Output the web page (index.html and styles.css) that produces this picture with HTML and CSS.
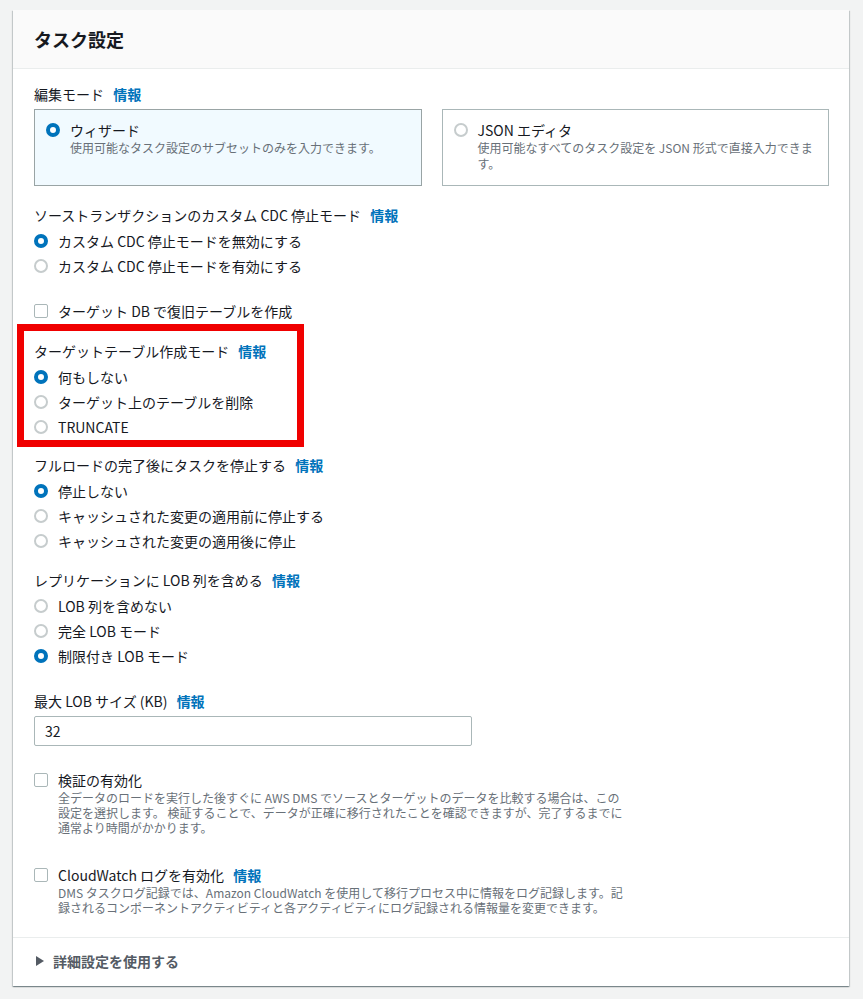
FILE: index.html
```html
<!DOCTYPE html>
<html lang="ja">
<head>
  <meta charset="UTF-8">
  <meta name="viewport" content="width=device-width, initial-scale=1">
  <title>タスク設定</title>
  <link rel="stylesheet" href="styles.css">
</head>
<body>
  <div class="page">
    <section class="card">
      <header class="card-header">
        <h2>タスク設定</h2>
      </header>

      <div class="card-body">
        <!-- 編集モード -->
        <div class="field field-mode">
          <div class="label">編集モード <a class="info">情報</a></div>
          <div class="tiles">
            <div class="tile tile-selected">
              <span class="radio checked"></span>
              <div class="tile-text">
                <div class="tile-title">ウィザード</div>
                <div class="desc">使用可能なタスク設定のサブセットのみを入力できます。</div>
              </div>
            </div>
            <div class="tile">
              <span class="radio"></span>
              <div class="tile-text">
                <div class="tile-title">JSON エディタ</div>
                <div class="desc">使用可能なすべてのタスク設定を JSON 形式で直接入力できま<br>す。</div>
              </div>
            </div>
          </div>
        </div>

        <div class="field field-cdc">
          <div class="label">ソーストランザクションのカスタム CDC 停止モード <a class="info">情報</a></div>
          <div class="options">
            <div class="option"><span class="radio checked"></span>カスタム CDC 停止モードを無効にする</div>
            <div class="option"><span class="radio"></span>カスタム CDC 停止モードを有効にする</div>
          </div>
        </div>

        <div class="field field-recovery">
          <div class="option"><span class="checkbox"></span>ターゲット DB で復旧テーブルを作成</div>
        </div>

        <!-- 強調枠 -->
        <div class="highlight">
          <div class="label">ターゲットテーブル作成モード <a class="info">情報</a></div>
          <div class="options">
            <div class="option"><span class="radio checked"></span>何もしない</div>
            <div class="option"><span class="radio"></span>ターゲット上のテーブルを削除</div>
            <div class="option"><span class="radio"></span>TRUNCATE</div>
          </div>
        </div>

        <div class="field field-fullload">
          <div class="label">フルロードの完了後にタスクを停止する <a class="info">情報</a></div>
          <div class="options">
            <div class="option"><span class="radio checked"></span>停止しない</div>
            <div class="option"><span class="radio"></span>キャッシュされた変更の適用前に停止する</div>
            <div class="option"><span class="radio"></span>キャッシュされた変更の適用後に停止</div>
          </div>
        </div>

        <div class="field field-lob">
          <div class="label">レプリケーションに LOB 列を含める <a class="info">情報</a></div>
          <div class="options">
            <div class="option"><span class="radio"></span>LOB 列を含めない</div>
            <div class="option"><span class="radio"></span>完全 LOB モード</div>
            <div class="option"><span class="radio checked"></span>制限付き LOB モード</div>
          </div>
        </div>

        <div class="field field-lobsize">
          <div class="label">最大 LOB サイズ (KB) <a class="info">情報</a></div>
          <input class="text-input" type="text" value="32">
        </div>

        <div class="field field-validation">
          <div class="check-item">
            <span class="checkbox"></span>
            <div>
              <div class="check-title">検証の有効化</div>
              <div class="desc desc-long">全データのロードを実行した後すぐに AWS DMS でソースとターゲットのデータを比較する場合は、この<br>設定を選択します。 検証することで、データが正確に移行されたことを確認できますが、完了するまでに<br>通常より時間がかかります。</div>
            </div>
          </div>
        </div>

        <div class="field field-cloudwatch">
          <div class="check-item">
            <span class="checkbox"></span>
            <div>
              <div class="check-title">CloudWatch ログを有効化 <a class="info">情報</a></div>
              <div class="desc desc-long">DMS タスクログ記録では、Amazon CloudWatch を使用して移行プロセス中に情報をログ記録します。記<br>録されるコンポーネントアクティビティと各アクティビティにログ記録される情報量を変更できます。</div>
            </div>
          </div>
        </div>
      </div>

      <footer class="card-footer">
        <span class="caret"></span>詳細設定を使用する
      </footer>
    </section>
  </div>
</body>
</html>
```

FILE: styles.css
```css
html, body {
  margin: 0;
  padding: 0;
  background: #f2f3f3;
  font-family: "Noto Sans CJK JP", "Noto Sans", sans-serif;
  color: #16191f;
  font-size: 14px;
}
.page {
  padding: 10px 14px 13px 13px;
}
/* カード全体 */
.card {
  background: #fff;
  box-shadow: 0 1px 1px 0 rgba(0, 28, 36, 0.3),
              1px 1px 1px 0 rgba(0, 28, 36, 0.15),
              -1px 1px 1px 0 rgba(0, 28, 36, 0.15);
}
.card-header {
  background: #fafafa;
  border-bottom: 1px solid #eaeded;
  padding: 17px 21px 17px;
}
.card-header h2 {
  margin: 0;
  font-size: 18px;
  line-height: 24px;
  font-weight: 700;
}
.card-body {
  padding: 15px 20px 22px 21px;
}
.label {
  line-height: 20px;
  white-space: nowrap;
}
.info {
  color: #0073bb;
  font-weight: 700;
  margin-left: 6px;
}
/* 項目ごとの間隔 */
.field-cdc { margin-top: 19px; }
.field-recovery { margin-top: 20px; }
.field-fullload { margin-top: 8px; }
.field-lob { margin-top: 17px; }
.field-lobsize { margin-top: 23px; }
.field-validation { margin-top: 24px; }
.field-cloudwatch { margin-top: 30px; }

/* タイル型ラジオ */
.tiles {
  display: grid;
  grid-template-columns: 1fr 1fr;
  gap: 20px;
  margin-top: 5px;
}
.tile {
  display: flex;
  align-items: flex-start;
  gap: 10px;
  height: 77px;
  box-sizing: border-box;
  border: 1px solid #aab7b8;
  padding: 10px 8px 0 11px;
}
.tile-selected {
  background: #f1faff;
  border-color: #99a4a5;
}
.tile .radio {
  margin-top: 3px;
}
.tile-title {
  line-height: 20px;
}
.desc {
  font-size: 12px;
  line-height: 16px;
  color: #687078;
  white-space: nowrap;
}
.desc-long {
  line-height: 15px;
}

/* ラジオ・チェックボックス */
.options {
  margin-top: 3px;
}
.option {
  display: flex;
  align-items: center;
  gap: 10px;
  height: 25px;
}
.radio {
  flex: none;
  width: 14px;
  height: 14px;
  box-sizing: border-box;
  border: 2px solid #c6cccd;
  border-radius: 50%;
  background: #fff;
}
.radio.checked {
  border: 4px solid #0073bb;
}
.checkbox {
  flex: none;
  width: 14px;
  height: 14px;
  box-sizing: border-box;
  border: 1px solid #aab7b8;
  border-radius: 2px;
  background: #fff;
}
.check-item {
  display: flex;
  align-items: flex-start;
  gap: 10px;
}
.check-item .checkbox {
  margin-top: 3px;
}
.check-title {
  line-height: 20px;
}

/* 赤い強調枠 */
.highlight {
  width: 287px;
  box-sizing: border-box;
  margin: 1px 0 0 -17px;
  border: 7px solid #f00000;
  padding: 10px 0 1px 10px;
}

.text-input {
  display: block;
  margin-top: 5px;
  width: 438px;
  height: 30px;
  box-sizing: border-box;
  border: 1px solid #aab7b8;
  border-radius: 2px;
  padding: 0 10px;
  font: inherit;
  font-size: 14px;
  color: #16191f;
}

.card-footer {
  border-top: 1px solid #eaeded;
  padding: 13px 21px 15px 23px;
  line-height: 20px;
  font-weight: 700;
  color: #545b64;
  display: flex;
  align-items: center;
  gap: 9px;
}
.caret {
  width: 0;
  height: 0;
  border-left: 8px solid #545b64;
  border-top: 5px solid transparent;
  border-bottom: 5px solid transparent;
}
```
